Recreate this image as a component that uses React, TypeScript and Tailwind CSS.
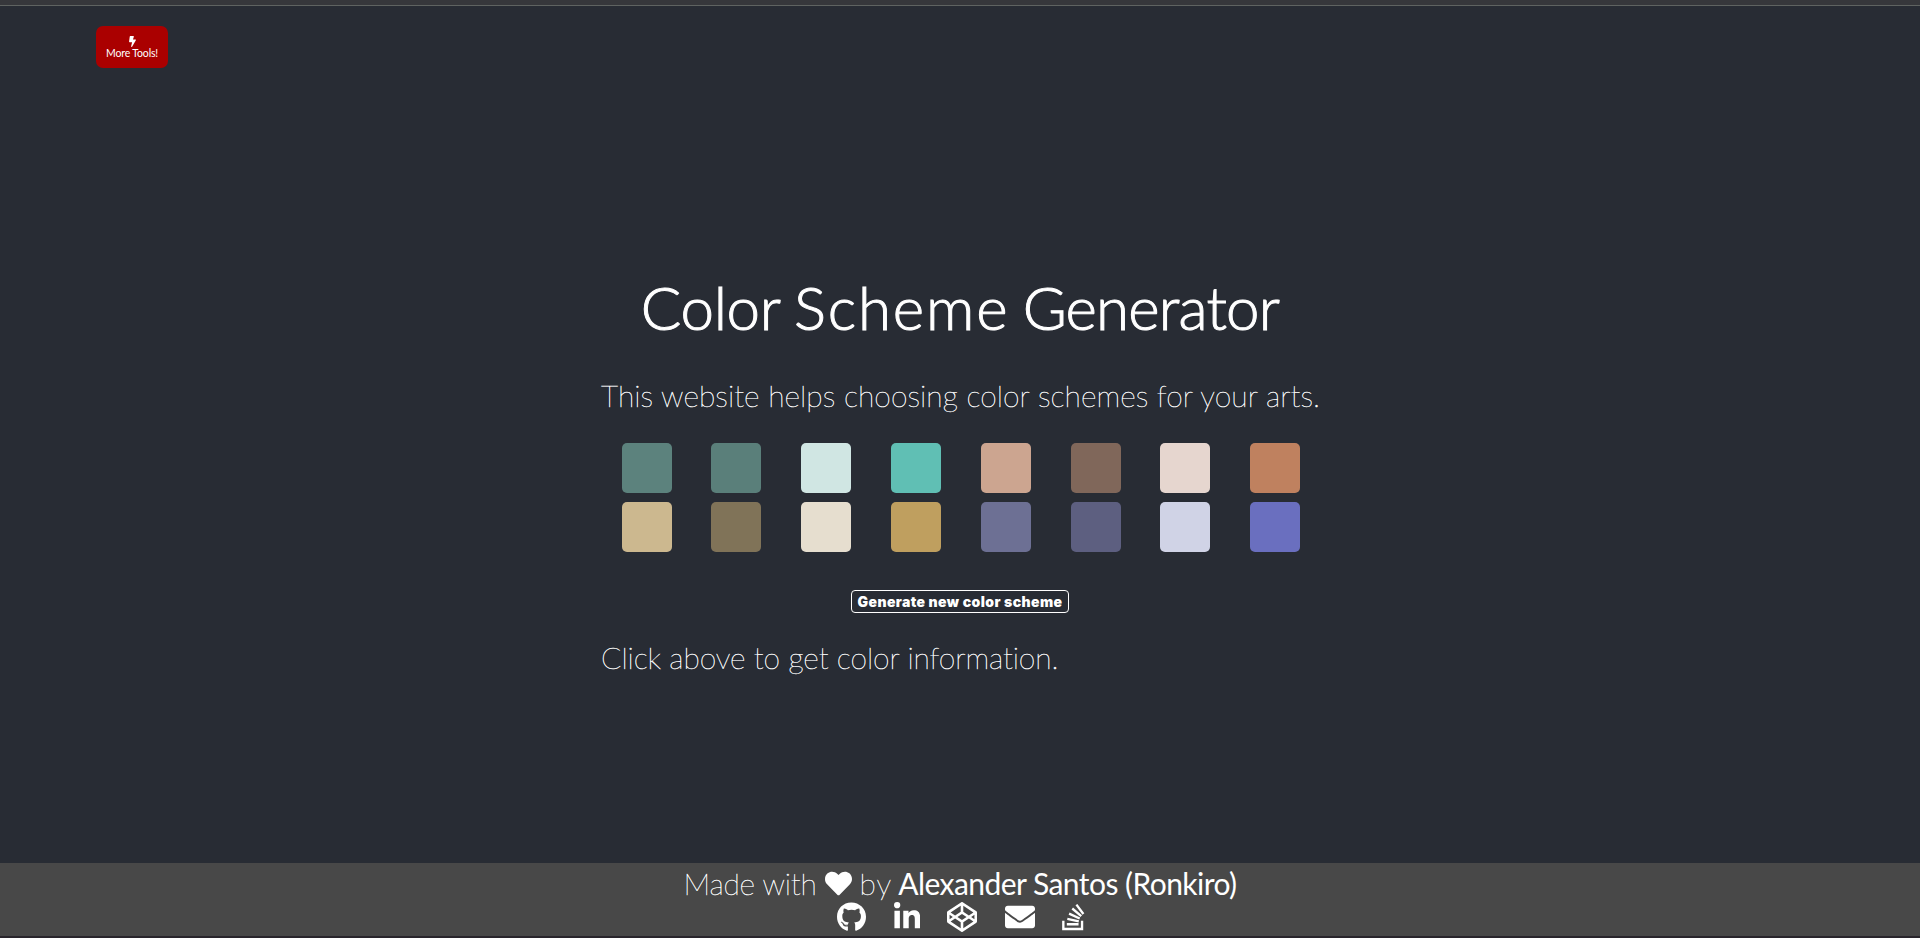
import { FaBolt, FaCodepen, FaEnvelope, FaGithub, FaHeart, FaLinkedinIn, FaStackOverflow } from 'react-icons/fa';

const swatches: string[] = [
  '#5c827d', '#5a7f7a', '#d0e6e3', '#60bfb4', '#cca590', '#80675a', '#e6d6cf', '#bf815f',
  '#ccb88f', '#807358', '#e6decf', '#bf9f5f', '#6d7094', '#5d5f80', '#d0d3e6', '#6a6fbf',
];

export default function App() {
  return (
    <div className="flex h-[938px] w-full flex-col overflow-hidden bg-[#282c34] text-white antialiased [font-family:Lato,'Open_Sans',sans-serif]">
      <div className="h-[6px] shrink-0 border-b border-[#5f6361] bg-[#36373b]" />
      <header className="flex h-[62px] shrink-0 items-end pl-24">
        <button className="flex h-[42px] w-[72px] flex-col items-center rounded-[7px] bg-[#aa0000] pt-[10px]">
          <FaBolt className="h-[11px] w-[11px]" />
          <span className="whitespace-nowrap text-[10.5px] leading-[12px] tracking-[-0.15px]">More Tools!</span>
        </button>
      </header>
      <main className="mx-auto flex w-[720px] grow flex-col">
        <h1 className="mt-[199px] h-[80px] whitespace-nowrap text-center text-[60px] font-light leading-[80px] [-webkit-text-stroke:1px_white] [word-spacing:-3px]">
          <span className="tracking-[-0.3px]">Color</span> <span className="tracking-[1.9px]">Scheme</span> <span className="tracking-[-0.8px]">Generator</span>
        </h1>
        <p className="mt-[28px] h-[40px] whitespace-nowrap pl-px text-[30px] font-thin leading-[40px] tracking-[0.05px] [-webkit-text-stroke:0.4px_white]">This website helps choosing color schemes for your arts.</p>
        <div className="mt-[28px] ml-[21.7px] grid grid-cols-[repeat(8,50px)] gap-x-[39.77px] gap-y-[9px]">
          {swatches.map((color, index) => (
            <div key={index} className="size-[50px] rounded-[5px]" style={{ backgroundColor: color }} />
          ))}
        </div>
        <button className="mx-auto mt-[38px] h-[23px] w-[218px] shrink-0 whitespace-nowrap rounded-[4px] border border-white text-[14px] font-black leading-[21px] tracking-[0.4px] [font-family:Inter,sans-serif]">Generate new color scheme</button>
        <p className="mt-[24px] h-[40px] whitespace-nowrap pl-px text-[30px] font-thin leading-[40px] tracking-[-0.1px] [-webkit-text-stroke:0.4px_white]">Click above to get color information.</p>
      </main>
      <footer className="flex h-[73px] shrink-0 flex-col items-center bg-[#484848]">
        <div className="flex h-[40px] items-center whitespace-nowrap text-[30px] leading-[40px]">
          <span className="font-thin tracking-[-0.2px] [-webkit-text-stroke:0.4px_white]">Made with</span>
          <FaHeart className="mx-[8px] size-[27px]" />
          <span className="font-thin tracking-[1px] [-webkit-text-stroke:0.4px_white]">by</span>
          <span className="ml-[6px] tracking-[-0.55px]">Alexander Santos (Ronkiro)</span>
        </div>
        <div className="flex h-[28px] items-center gap-[27.5px] pl-[2px]">
          <FaGithub className="h-[30px] w-[29px]" />
          <FaLinkedinIn className="h-[30px] w-[26.25px]" />
          <FaCodepen className="size-[30px]" />
          <FaEnvelope className="size-[30px]" />
          <FaStackOverflow className="h-[30px] w-[22.5px]" />
        </div>
      </footer>
      <div className="h-[2px] shrink-0 bg-[#29252c]" />
    </div>
  );
}
